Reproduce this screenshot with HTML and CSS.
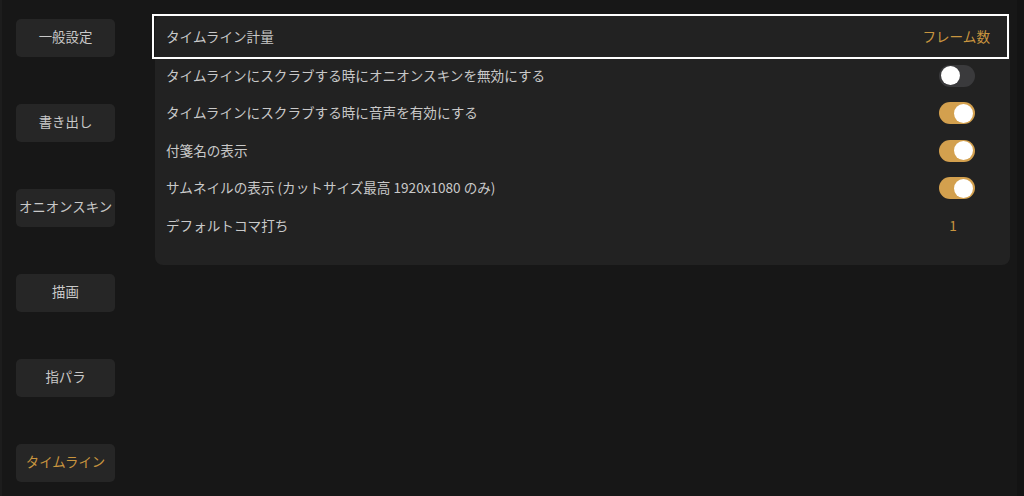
FILE: index.html
```
<!DOCTYPE html>
<html lang="ja">
<head>
    <meta charset="UTF-8">
    <meta name="viewport" content="width=device-width, initial-scale=1.0">
    <title>設定</title>
    <link rel="stylesheet" href="styles.css">
</head>
<body>
    <div class="menu">
        <button class="menu-btn">一般設定</button>
        <button class="menu-btn">書き出し</button>
        <button class="menu-btn">オニオンスキン</button>
        <button class="menu-btn">描画</button>
        <button class="menu-btn">指パラ</button>
        <button class="menu-btn active">タイムライン</button>
    </div>

    <div class="content">
        <div class="panel">
            <div class="row selected">
                <span>タイムライン計量</span>
                <span class="value">フレーム数</span>
            </div>
            <div class="row">
                <span>タイムラインにスクラブする時にオニオンスキンを無効にする</span>
                <span class="toggle"></span>
            </div>
            <div class="row">
                <span>タイムラインにスクラブする時に音声を有効にする</span>
                <span class="toggle on"></span>
            </div>
            <div class="row">
                <span>付箋名の表示</span>
                <span class="toggle on"></span>
            </div>
            <div class="row">
                <span>サムネイルの表示 (カットサイズ最高 1920x1080 のみ)</span>
                <span class="toggle on"></span>
            </div>
            <div class="row">
                <span>デフォルトコマ打ち</span>
                <span class="num">1</span>
            </div>
        </div>
    </div>

    <div class="edge"></div>
</body>
</html>
```

FILE: styles.css
```
body {
    margin: 0;
    height: 496px;
    display: flex;
    background-color: #171717;
    border-left: 2px solid #1d1d1d;
    box-sizing: border-box;
    font-family: "Noto Sans CJK JP", "Noto Sans", sans-serif;
    font-size: 13.6px;
    color: #c9c9c9;
    overflow: hidden;
}

.menu {
    width: 137px;
    padding: 19px 0 0 14px;
    box-sizing: border-box;
    display: flex;
    flex-direction: column;
    gap: 47px;
}

.menu-btn {
    width: 99px;
    height: 38px;
    border: none;
    border-radius: 5px;
    background-color: #262626;
    color: #c9c9c9;
    font-family: inherit;
    font-size: 13.4px;
    line-height: 1;
    padding: 0 0 2px;
}

.menu-btn.active {
    color: #c9953f;
}

.content {
    flex: 1;
    padding: 14px 0 0 16px;
}

.panel {
    width: 855px;
    padding-bottom: 20.5px;
    background-color: #222222;
    border-radius: 8px;
}

.row {
    height: 37.5px;
    display: flex;
    align-items: center;
    justify-content: space-between;
    padding: 0 35px 0 11px;
}

.row span {
    line-height: 1;
}

.row.selected {
    height: 45px;
    box-sizing: border-box;
    margin: 0 1px -2px -3px;
    padding: 0 17px 0 12px;
    border: 2px solid #ffffff;
}

.value {
    color: #c9953f;
}

.num {
    width: 28px;
    margin-right: 8px;
    text-align: center;
    color: #c9953f;
}

.toggle {
    width: 36px;
    height: 22px;
    border-radius: 11px;
    background-color: #3a3a3c;
    position: relative;
}

.toggle::after {
    content: "";
    position: absolute;
    top: 1.5px;
    left: 2px;
    width: 19px;
    height: 19px;
    border-radius: 50%;
    background-color: #ffffff;
}

.toggle.on {
    background-color: #d3a04e;
}

.toggle.on::after {
    left: 15px;
}

.edge {
    width: 7px;
    background-color: #131313;
}
```
